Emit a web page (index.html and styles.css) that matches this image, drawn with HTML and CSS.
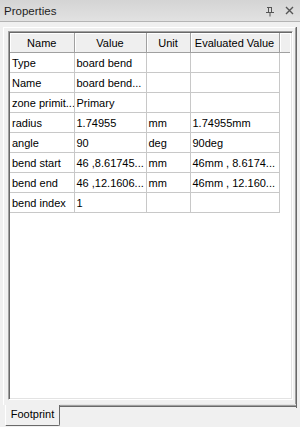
FILE: index.html
```html
<!DOCTYPE html>
<html lang="en">
<head>
  <meta charset="UTF-8">
  <title>Properties</title>
  <link rel="stylesheet" href="styles.css">
</head>
<body>
  <div class="titlebar">
    <span class="title">Properties</span>
    <span class="tools">
      <svg class="pin" width="8" height="10" viewBox="0 0 8 10">
        <path d="M1 0.5h5M2.5 0.5v5M5.5 0.5v5M0 5.5h8M4 5.5v4" stroke="#555" stroke-width="1" fill="none"/>
      </svg>
      <svg class="close" width="9" height="9" viewBox="0 0 9 9">
        <path d="M1 1l7 7M8 1l-7 7" stroke="#555" stroke-width="1.4" fill="none"/>
      </svg>
    </span>
  </div>

  <div class="tabpage">
    <div class="grid">
      <table>
        <colgroup>
          <col class="c-name"><col class="c-value"><col class="c-unit"><col class="c-eval"><col>
        </colgroup>
        <thead>
          <tr><th>Name</th><th>Value</th><th>Unit</th><th>Evaluated Value</th><th class="filler"></th></tr>
        </thead>
        <tbody>
          <tr><td>Type</td><td>board bend</td><td></td><td></td><td class="filler"></td></tr>
          <tr><td>Name</td><td>board bend...</td><td></td><td></td><td class="filler"></td></tr>
          <tr><td>zone primit...</td><td>Primary</td><td></td><td></td><td class="filler"></td></tr>
          <tr><td>radius</td><td>1.74955</td><td>mm</td><td>1.74955mm</td><td class="filler"></td></tr>
          <tr><td>angle</td><td>90</td><td>deg</td><td>90deg</td><td class="filler"></td></tr>
          <tr><td>bend start</td><td>46 ,8.61745...</td><td>mm</td><td>46mm , 8.6174...</td><td class="filler"></td></tr>
          <tr><td>bend end</td><td>46 ,12.1606...</td><td>mm</td><td>46mm , 12.160...</td><td class="filler"></td></tr>
          <tr><td>bend index</td><td>1</td><td></td><td></td><td class="filler"></td></tr>
        </tbody>
      </table>
    </div>
  </div>

  <div class="tabstrip">
    <div class="tab">Footprint</div>
    <div class="tabrest"></div>
  </div>
</body>
</html>
```

FILE: styles.css
```css
body { margin: 0; width: 300px; height: 427px; background: #f0f0f0; font-family: "Liberation Sans", Arial, sans-serif; font-size: 11px; color: #000; overflow: hidden; }

.titlebar { height: 21px; border-bottom: 1px solid #b4b4b4; background: linear-gradient(#d4d4d4, #e2e2e2); display: flex; align-items: center; justify-content: space-between; padding: 0 6px 0 4px; }
.title { font-size: 11.5px; color: #1e1e1e; }
.tools { display: flex; align-items: center; gap: 11px; }
.pin { margin-top: 2px; }

.tabpage { margin: 5px 4px 0 3px; height: 371px; border-top: 1px solid #fff; border-left: 1px solid #fff; border-right: 1px solid #a0a0a0; box-shadow: 1px 0 0 #696969; padding: 3px 2px 3px 4px; }
.grid { height: 366px; background: #fff; border-top: 1px solid #a0a0a0; border-left: 1px solid #a0a0a0; border-right: 1px solid #fff; border-bottom: 1px solid #fff; box-shadow: inset 1px 1px 0 #696969, inset -1px -1px 0 #e3e3e3; padding: 1px 0 0 1px; }

table { border-collapse: collapse; table-layout: fixed; width: 280px; }
.c-name { width: 64px; }
.c-value { width: 72px; }
.c-unit { width: 44px; }
.c-eval { width: 89px; }

th { height: 19px; padding: 0; font-weight: normal; text-align: center; background: #efefef; border-right: 1px solid #a0a0a0; border-bottom: 1px solid #a0a0a0; box-shadow: inset 1px 1px 0 #fff; white-space: nowrap; overflow: hidden; }
td { height: 19px; padding: 0 0 0 2px; border-right: 1px solid #c8c8c8; border-bottom: 1px solid #c8c8c8; white-space: nowrap; overflow: hidden; }
td.filler { border: none; }
th.filler { border-right: none; }

.tabstrip { display: flex; margin: 0 4px 0 3px; height: 22px; }
.tab { width: 55px; margin-left: 2px; border-left: 1px solid #fff; border-right: 1px solid #696969; border-bottom: 1px solid #696969; border-bottom-right-radius: 2px; display: flex; align-items: center; justify-content: center; padding-bottom: 2px; box-sizing: border-box; height: 21px; }
.tabrest { flex: 1; border-top: 1px solid #a0a0a0; box-shadow: 0 -1px 0 #e3e3e3, inset 0 1px 0 #696969, 1px 0 0 #696969; height: 2px; }
```
